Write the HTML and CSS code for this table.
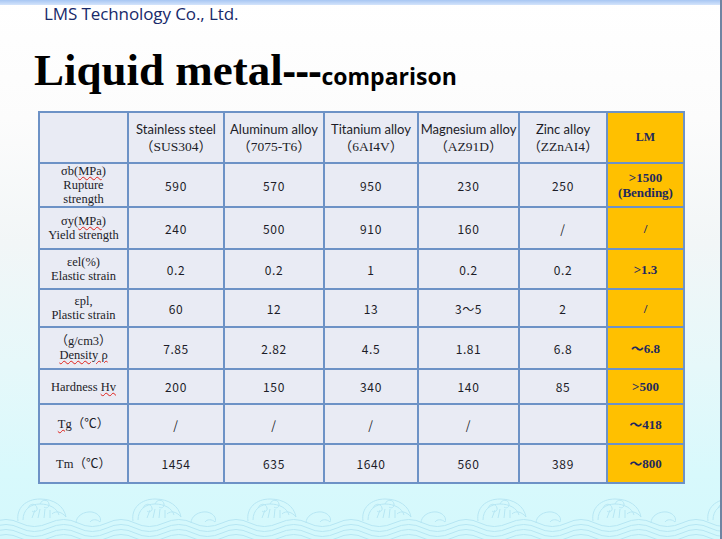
FILE: index.html
```html
<!DOCTYPE html>
<html>
<head>
<meta charset="utf-8">
<link rel="stylesheet" href="styles.css">
</head>
<body>
<div class="slide">
  <div class="topbar"></div>
  <div class="company">LMS Technology Co., Ltd.</div>
  <h1 class="title">Liquid metal<span class="dash">---</span><span class="sub">comparison</span></h1>
  <table class="cmp">
    <colgroup>
      <col class="c0"><col class="c1"><col class="c2"><col class="c3"><col class="c4"><col class="c5"><col class="c6">
    </colgroup>
    <tr class="r-head">
      <td></td>
      <td><span class="hname">Stainless steel</span><span class="hcode">（SUS304）</span></td>
      <td><span class="hname">Aluminum alloy</span><span class="hcode">（7075-T6）</span></td>
      <td><span class="hname">Titanium alloy</span><span class="hcode">（6AI4V）</span></td>
      <td><span class="hname">Magnesium alloy</span><span class="hcode">（AZ91D）</span></td>
      <td><span class="hname">Zinc alloy</span><span class="hcode">（ZZnAI4）</span></td>
      <td class="lm lm-head">LM</td>
    </tr>
    <tr class="r1">
      <td class="lab">σb(<span class="sp">MPa</span>)<br>Rupture<br>strength</td>
      <td class="num">590</td><td class="num">570</td><td class="num">950</td><td class="num">230</td><td class="num">250</td>
      <td class="lm">&gt;1500<br>(Bending)</td>
    </tr>
    <tr class="r2">
      <td class="lab">σy(<span class="sp">MPa</span>)<br>Yield strength</td>
      <td class="num">240</td><td class="num">500</td><td class="num">910</td><td class="num">160</td><td class="num">/</td>
      <td class="lm">/</td>
    </tr>
    <tr class="r3">
      <td class="lab">εel(%)<br>Elastic strain</td>
      <td class="num">0.2</td><td class="num">0.2</td><td class="num">1</td><td class="num">0.2</td><td class="num">0.2</td>
      <td class="lm">&gt;1.3</td>
    </tr>
    <tr class="r4">
      <td class="lab">εpl,<br>Plastic strain</td>
      <td class="num">60</td><td class="num">12</td><td class="num">13</td><td class="num">3～5</td><td class="num">2</td>
      <td class="lm">/</td>
    </tr>
    <tr class="r5">
      <td class="lab">（g/cm3）<br><span class="sp">Density ρ</span></td>
      <td class="num">7.85</td><td class="num">2.82</td><td class="num">4.5</td><td class="num">1.81</td><td class="num">6.8</td>
      <td class="lm">～6.8</td>
    </tr>
    <tr class="r6">
      <td class="lab">Hardness <span class="sp">Hv</span></td>
      <td class="num">200</td><td class="num">150</td><td class="num">340</td><td class="num">140</td><td class="num">85</td>
      <td class="lm">&gt;500</td>
    </tr>
    <tr class="r7">
      <td class="lab"><span class="sp">Tg</span>（℃）</td>
      <td class="num">/</td><td class="num">/</td><td class="num">/</td><td class="num">/</td><td class="num"></td>
      <td class="lm">～418</td>
    </tr>
    <tr class="r8">
      <td class="lab">Tm（℃）</td>
      <td class="num">1454</td><td class="num">635</td><td class="num">1640</td><td class="num">560</td><td class="num">389</td>
      <td class="lm">～800</td>
    </tr>
  </table>
  <svg class="waves" width="722" height="44" viewBox="0 0 722 44">
    <defs>
      <pattern id="wv" x="-8" y="0" width="115" height="44" patternUnits="userSpaceOnUse">
        <g fill="none" stroke="#b6e6f3" stroke-width="1">
          <path d="M0 28 Q 14 21 28 28 T 57 28 T 86 28 T 115 28"/>
          <path d="M0 33 Q 14 26 28 33 T 57 33 T 86 33 T 115 33"/>
          <path d="M0 38 Q 14 31 28 38 T 57 38 T 86 38 T 115 38"/>
          <path d="M0 43 Q 14 36 28 43 T 57 43 T 86 43 T 115 43"/>
          <path d="M26 26 C 24 13 34 4 48 4 C 62 4 72 11 74 22 C 70 17 64 15 60 19"/>
          <path d="M31 25 C 31 15 38 9 48 9 C 57 9 65 13 67 20"/>
          <path d="M36 13 c 2 -5 8 -5 9 0 c 1 3 -3 5 -5 3"/>
          <path d="M48 9 c 2 -5 8 -5 9 0 c 1 3 -3 5 -5 3"/>
          <path d="M40 23 l 3 -8 M46 23 l 2 -9 M52 23 l 1 -9 M58 23 l 0 -8"/>
          <path d="M84 28 C 84 21 92 16 100 17 C 106 18 110 23 108 27 C 105 24 100 24 98 27"/>
        </g>
      </pattern>
    </defs>
    <rect width="722" height="44" fill="url(#wv)"/>
  </svg>
</div>
</body>
</html>
```
FILE: styles.css
```css
html, body {
  margin: 0;
  padding: 0;
}
body {
  width: 722px;
  height: 539px;
  overflow: hidden;
}
.slide {
  position: relative;
  box-sizing: border-box;
  width: 722px;
  height: 539px;
  overflow: hidden;
  border-right: 2px solid #6f84a2;
  background: linear-gradient(to bottom, #ffffff 0%, #fcfcfc 22%, #f2f6f7 45%, #e6f8fa 68%, #d8f9fc 88%, #d4f8fc 100%);
}
.topbar {
  height: 5px;
  background: linear-gradient(to bottom, #a7c6f3, #d4e4fb);
}
.company {
  margin: 0 0 0 44px;
  font-family: "Open Sans", "Liberation Sans", sans-serif;
  font-size: 17px;
  line-height: 18px;
  color: #17296a;
  letter-spacing: -0.1px;
}
.title {
  margin: 24px 0 0 34px;
  font-family: "Liberation Serif", serif;
  font-weight: bold;
  font-size: 45px;
  line-height: 46px;
  color: #000;
  height: 64px;
}
.title .dash {
  font-family: "Open Sans", "Liberation Sans", sans-serif;
  font-size: 40px;
}
.title .sub {
  font-family: "Open Sans", "Liberation Sans", sans-serif;
  font-size: 23px;
  font-weight: bold;
}
.cmp {
  margin-left: 38px;
  width: 647px;
  table-layout: fixed;
  border-collapse: collapse;
  border: 2px solid #6d92c6;
}
.cmp td {
  border: 2px solid #6d92c6;
  background: #e9ebf4;
  text-align: center;
  vertical-align: middle;
  padding: 0;
  color: #1c1c28;
  overflow: hidden;
}
.c0 { width: 89px; }
.c1 { width: 96px; }
.c2 { width: 100px; }
.c3 { width: 94px; }
.c4 { width: 101px; }
.c5 { width: 88px; }
.c6 { width: 77px; }
.r-head { height: 51px; }
.r1 { height: 43px; }
.r2 { height: 42px; }
.r3 { height: 40px; }
.r4 { height: 38px; }
.r5 { height: 42px; }
.r6 { height: 35px; }
.r7 { height: 40px; }
.r8 { height: 39px; }
.hname {
  display: block;
  font-family: "Lato", "Open Sans", sans-serif;
  font-size: 13px;
  line-height: 18px;
  white-space: nowrap;
}
.hcode {
  display: block;
  font-family: "Liberation Serif", "Noto Sans CJK SC", serif;
  font-size: 13.5px;
  line-height: 18px;
  white-space: nowrap;
}
.lab {
  font-family: "Liberation Serif", "Noto Sans CJK SC", serif;
  font-size: 12.5px;
  line-height: 14px;
}
.sp {
  text-decoration: underline wavy #e0201a;
  text-decoration-thickness: 1px;
  text-underline-offset: 1px;
}
.num {
  font-family: "Noto Sans CJK SC", "Liberation Sans", sans-serif;
  font-size: 12px;
  letter-spacing: 0.6px;
}
.cmp td.lm {
  background: #ffc000;
  font-family: "Liberation Serif", "Noto Sans CJK SC", serif;
  font-weight: bold;
  font-size: 13px;
  line-height: 15px;
  color: #1f2a5e;
}
.cmp td.lm-head {
  font-size: 12px;
}
.waves {
  position: absolute;
  left: 0;
  bottom: 0;
  display: block;
}
```
